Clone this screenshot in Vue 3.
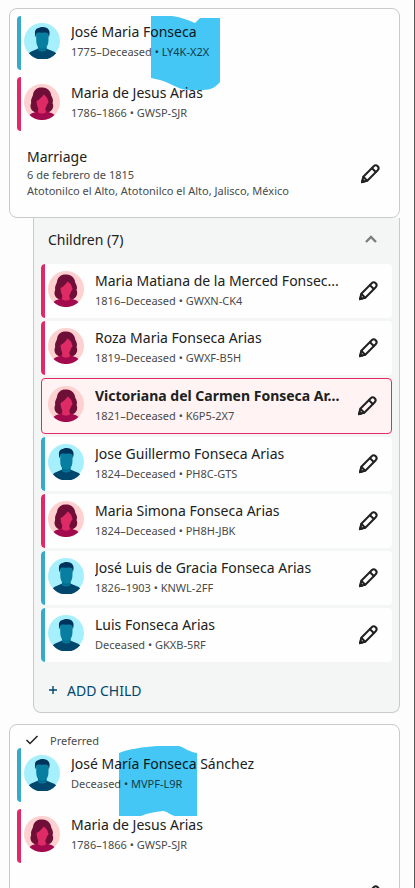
<script setup>
import { h } from 'vue'

const firstCouple = [
  { name: 'José Maria Fonseca', meta: '1775–Deceased • LY4K-X2X', sex: 'male' },
  { name: 'Maria de Jesus Arias', meta: '1786–1866 • GWSP-SJR', sex: 'female' },
]

const secondCouple = [
  { name: 'José María Fonseca Sánchez', meta: 'Deceased • MVPF-L9R', sex: 'male' },
  { name: 'Maria de Jesus Arias', meta: '1786–1866 • GWSP-SJR', sex: 'female' },
]

const children = [
  { name: 'Maria Matiana de la Merced Fonsec...', meta: '1816–Deceased • GWXN-CK4', sex: 'female' },
  { name: 'Roza Maria Fonseca Arias', meta: '1819–Deceased • GWXF-B5H', sex: 'female' },
  { name: 'Victoriana del Carmen Fonseca Ar...', meta: '1821–Deceased • K6P5-2X7', sex: 'female', selected: true },
  { name: 'Jose Guillermo Fonseca Arias', meta: '1824–Deceased • PH8C-GTS', sex: 'male' },
  { name: 'Maria Simona Fonseca Arias', meta: '1824–Deceased • PH8H-JBK', sex: 'female' },
  { name: 'José Luis de Gracia Fonseca Arias', meta: '1826–1903 • KNWL-2FF', sex: 'male' },
  { name: 'Luis Fonseca Arias', meta: 'Deceased • GKXB-5RF', sex: 'male' },
]

const shapes = {
  male: [
    ['#a6f0fd', 'M18 0a18 18 0 1 1 0 36a18 18 0 0 1 0-36z'],
    ['#00476d', 'M4.800 30.300C7 27.800 11 27.600 13.500 25.800h9.500c2.500 1.800 7 2 9.200 4.500A18 18 0 0 1 4.800 30.300z'],
    ['#087fa1', 'M12.200 9h12.300v7c0 4-.6 6-2 8v2.500c-1 2.500-7.500 2.500-8.500 0V24c-1.300-2-1.800-4-1.800-8z'],
    ['#006c90', 'M14 23.700c2 2.600 6.300 2.600 8.500 0v2c-2 2.400-6.500 2.400-8.500 0z'],
    ['#00335b', 'M11.500 14.500C10.300 9 11 5.800 14 5.300C17 3.200 23 3.300 24.500 6.500C26.300 8.500 25.500 11.500 24.900 14.500L24 10.200C22 9 20 10 17.500 9.800C15 9.600 13.500 9 12.500 10.500z'],
  ],
  female: [
    ['#ffd0d0', 'M18 0a18 18 0 1 1 0 36a18 18 0 0 1 0-36z'],
    ['#6f0e36', 'M10.500 28C7 26.500 5.500 22.500 7.200 19C6.500 16 8 13.500 9 11C9.500 5.500 14 3 18 3.500C23 3 27 7 27.200 11.500C29 14.500 29.500 17 28.500 19C30.500 23 28 27.500 24.500 28z'],
    ['#a20a4d', 'M5.500 31C8 28.300 11 29 14 26.500h8c3 2.500 6 1.800 8.500 4.500A18 18 0 0 1 5.500 31z'],
    ['#de2a65', 'M12.500 17C15 16 18 13 19.500 10.500C21.500 12 23.500 13 24 16.500C25 17 24.500 19.500 23.200 20C22.500 22.500 21.700 23.500 21.300 24.500L22 28.200C20 30 16 30 14 28.200L14.200 24C13 22.500 12.800 20 12.500 17z'],
  ],
}

const Avatar = (props) =>
  h(
    'svg',
    { class: 'avatar', viewBox: '0 0 36 36', width: 36, height: 36, 'aria-hidden': 'true' },
    shapes[props.sex].map(([fill, d]) => h('path', { fill, d })),
  )
Avatar.props = ['sex']

const Pencil = () =>
  h(
    'svg',
    {
      viewBox: '0 0 24 24', width: 24, height: 24, fill: 'none', stroke: '#202121',
      'stroke-width': 2, 'stroke-linejoin': 'round', 'stroke-linecap': 'round', 'aria-hidden': 'true',
    },
    [
      h('path', { d: 'M4 20L5.300 14.700L15.700 4.300C17 3 18.600 3.200 19.700 4.300C20.800 5.400 21 7 19.700 8.300L9.300 18.700z' }),
      h('path', { d: 'M14 6.200L17.800 10M5.500 15L9 18.500' }),
      h('path', { d: 'M3.500 20.500L4.500 17L7 19.500z', fill: '#202121', 'stroke-width': 1 }),
    ],
  )
</script>

<template>
  <main class="page">
    <section class="card">
      <div v-for="p in firstCouple" :key="p.meta" class="person" :class="p.sex">
        <Avatar :sex="p.sex" />
        <div class="info">
          <div class="name">{{ p.name }}</div>
          <div class="meta">{{ p.meta }}</div>
        </div>
      </div>
      <div class="event">
        <div class="event-text">
          <div class="name">Marriage</div>
          <div class="detail">6 de febrero de 1815</div>
          <div class="detail">Atotonilco el Alto, Atotonilco el Alto, Jalisco, México</div>
        </div>
        <button class="edit" type="button" aria-label="Edit"><Pencil /></button>
      </div>
      <svg class="mark mark-first" viewBox="0 0 69 74" width="69" height="74" aria-hidden="true">
        <path fill="#45c8f7" d="M0 0H21C29 1 37 4 44 7L49 2H69V66C65 71 60 74 52 74H38C28 74 22 68 9 64L0 62z" />
      </svg>
    </section>

    <section class="children">
      <button class="toggle" type="button" aria-expanded="true">
        <span>Children (7)</span>
        <svg viewBox="0 0 14 10" width="14" height="10" aria-hidden="true">
          <path d="M2 7L7 2L12 7" fill="none" stroke="#7c7e7e" stroke-width="2.400" />
        </svg>
      </button>
      <ul class="list">
        <li v-for="c in children" :key="c.meta" class="person child" :class="[c.sex, { selected: c.selected }]">
          <Avatar :sex="c.sex" />
          <div class="info">
            <div class="name">{{ c.name }}</div>
            <div class="meta">{{ c.meta }}</div>
          </div>
          <button class="edit" type="button" aria-label="Edit"><Pencil /></button>
        </li>
      </ul>
      <button class="add" type="button">
        <svg viewBox="0 0 10 10" width="10" height="10" aria-hidden="true">
          <path d="M5 1V9M1 5H9" stroke="#00476d" stroke-width="1.400" />
        </svg>
        <span>ADD CHILD</span>
      </button>
    </section>

    <section class="card second">
      <div class="preferred">
        <svg viewBox="0 0 14 12" width="14" height="12" aria-hidden="true">
          <path d="M1.500 6L5 9.500L12.500 2" fill="none" stroke="#202121" stroke-width="1.500" />
        </svg>
        <span>Preferred</span>
      </div>
      <div v-for="p in secondCouple" :key="p.meta" class="person" :class="p.sex">
        <Avatar :sex="p.sex" />
        <div class="info">
          <div class="name">{{ p.name }}</div>
          <div class="meta">{{ p.meta }}</div>
        </div>
      </div>
      <div class="event empty">
        <div class="event-text">
          <div class="name">No Marriage Events</div>
        </div>
        <button class="edit" type="button" aria-label="Edit"><Pencil /></button>
      </div>
      <svg class="mark mark-second" viewBox="0 0 78 70" width="78" height="70" aria-hidden="true">
        <path fill="#45c8f7" d="M0 7C10 3 24 1 38 0H60C66 2 70 6 78 7V70H56C51 69 48 65 44 65C36 66 29 67 22 70H0z" />
      </svg>
    </section>
  </main>
</template>

<style>
body {
  margin: 0;
  background: #fdfdfd;
}
</style>

<style scoped>
.page {
  box-sizing: border-box;
  height: 100vh;
  overflow-y: auto;
  scrollbar-width: none;
  padding: 8px 14px 8px 9px;
  border-right: 1px solid #58595a;
  background: #fdfdfd;
  color: #202121;
  font-family: "Noto Sans", sans-serif;
}
button {
  font: inherit;
  color: inherit;
  background: none;
  border: 0;
  padding: 0;
  cursor: pointer;
}
.card {
  position: relative;
  display: flex;
  flex-direction: column;
  gap: 7px;
  padding: 7px;
  border: 1px solid #c8cbcb;
  border-radius: 8px;
  background: #fefefe;
}
.person {
  box-sizing: border-box;
  position: relative;
  display: flex;
  align-items: flex-start;
  height: 54px;
  padding: 7px 9px 0 7px;
  overflow: hidden;
}
.person::before {
  content: "";
  position: absolute;
  inset: 0 auto 0 0;
  width: 4px;
  border-radius: 4px 0 0 4px;
  background: #37a9ca;
}
.person.female::before {
  background: #e02a68;
}
:deep(.avatar) {
  flex: none;
}
.info {
  flex: 1;
  min-width: 0;
  margin-left: 11px;
}
.name {
  font-size: 14px;
  line-height: 20px;
  overflow: hidden;
  white-space: nowrap;
  text-overflow: ellipsis;
}
.meta,
.detail {
  font-size: 11px;
  line-height: 16px;
  color: #494b4b;
}
.card .info {
  margin-top: -1px;
}
.person .meta {
  margin-top: 2px;
}
.event {
  display: flex;
  align-items: center;
  justify-content: space-between;
  padding: 9px 10px 11px;
}
.event .edit {
  padding-top: 2px;
}
.event.empty {
  padding-top: 11px;
}
.edit {
  display: flex;
  flex: none;
}
.mark {
  position: absolute;
  mix-blend-mode: multiply;
  pointer-events: none;
}
.mark-first {
  left: 141px;
  top: 7px;
}
.mark-second {
  left: 109px;
  top: 21px;
}
.children {
  margin-left: 24px;
  padding: 0 7px;
  border: 1px solid #c8cbcb;
  border-top: 0;
  border-radius: 0 0 8px 8px;
  background: #f4f6f6;
}
.toggle {
  display: flex;
  align-items: center;
  justify-content: space-between;
  width: 100%;
  height: 46px;
  padding: 0 14px 3px 7px;
  font-size: 14px;
}
.list {
  display: flex;
  flex-direction: column;
  gap: 3px;
  margin: 0;
  padding: 0;
  list-style: none;
}
.child {
  border-radius: 4px;
  background: #fefefe;
  padding-right: 12px;
}
.child .edit {
  align-self: center;
  margin-left: 12px;
  margin-top: -7px;
}
.child.selected {
  height: 56px;
  padding-left: 6px;
  border: 1px solid #e02a68;
  background: #fff3f4;
}
.child.selected::before {
  display: none;
}
.child.selected .name {
  font-weight: 700;
}
.add {
  display: flex;
  align-items: center;
  gap: 9px;
  height: 50px;
  padding: 6px 7px 0;
  color: #00476d;
  font-size: 14px;
}
.second {
  margin-top: 11px;
}
.preferred {
  display: flex;
  align-items: center;
  gap: 11px;
  height: 16px;
  margin-bottom: -7px;
  padding-left: 8px;
  font-size: 11px;
  color: #494b4b;
}
</style>
